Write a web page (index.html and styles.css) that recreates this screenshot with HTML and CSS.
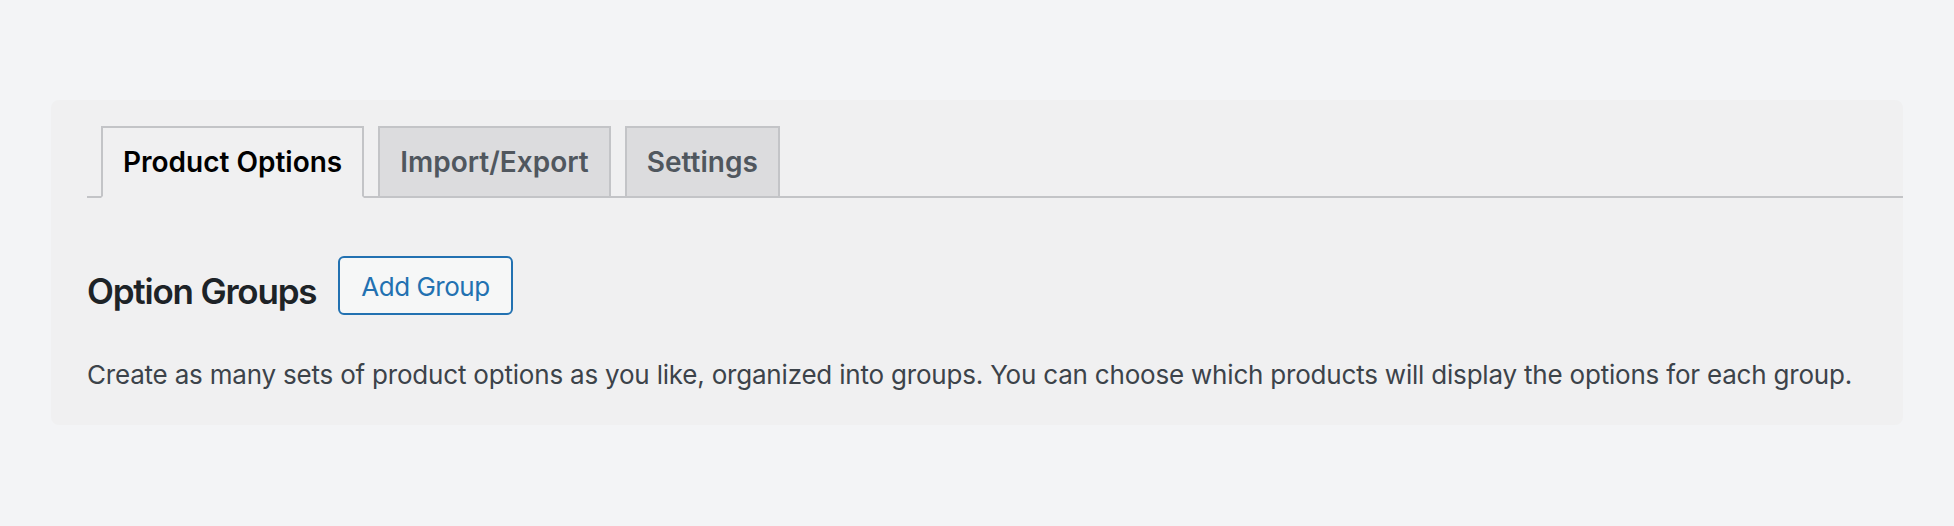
FILE: index.html
```html
<!DOCTYPE html>
<html lang="en">
<head>
<meta charset="utf-8">
<title>Product Options</title>
<link rel="stylesheet" href="styles.css">
</head>
<body>
<div class="panel">
  <nav class="tabs">
    <a class="tab tab-active" href="#">Product Options</a>
    <a class="tab" href="#">Import/Export</a>
    <a class="tab" href="#">Settings</a>
  </nav>
  <div class="head-row">
    <h2 class="title">Option Groups</h2>
    <button class="btn" type="button">Add Group</button>
  </div>
  <p class="desc">Create as many sets of product options as you like, organized into groups. You can choose which products will display the options for each group.</p>
</div>
</body>
</html>
```
FILE: styles.css
```css
html, body {
  margin: 0;
  padding: 0;
}
body {
  background: #f3f4f6;
  font-family: Inter, "Noto Sans", sans-serif;
  padding-top: 100px;
}
.panel {
  margin: 0 51px;
  background: #f0f0f1;
  border-radius: 8px;
  padding: 26px 0 32px 36px;
}
.tabs {
  display: flex;
  align-items: flex-end;
  border-bottom: 2px solid #c3c4c7;
}
.tab {
  display: block;
  margin-left: 14px;
  padding: 10px 20px;
  border: 2px solid #c3c4c7;
  border-bottom: none;
  background: #dcdcde;
  color: #50575e;
  font-size: 28px;
  font-weight: 600;
  line-height: 48px;
  text-decoration: none;
  white-space: nowrap;
}
.tab-active {
  background: #f0f0f1;
  color: #000;
  border-bottom: 2px solid #f0f0f1;
  margin-bottom: -2px;
}
.head-row {
  display: flex;
  align-items: flex-start;
  gap: 22px;
  margin-top: 58px;
}
.title {
  margin: 14px 0 0;
  font-size: 35px;
  font-weight: 600;
  line-height: 42px;
  letter-spacing: -1.2px;
  color: #1d2327;
}
.btn {
  margin: 0;
  height: 59px;
  box-sizing: border-box;
  padding: 2px 21px 0;
  border: 2px solid #2271b1;
  border-radius: 6px;
  background: #f6f7f7;
  color: #2271b1;
  font-family: Inter, "Noto Sans", sans-serif;
  font-size: 26px;
  font-weight: 400;
  line-height: 53px;
  letter-spacing: -0.5px;
  cursor: pointer;
}
.desc {
  margin: 42px 0 0;
  font-size: 26px;
  line-height: 36px;
  letter-spacing: -0.2px;
  color: #3c434a;
  white-space: nowrap;
}
```
